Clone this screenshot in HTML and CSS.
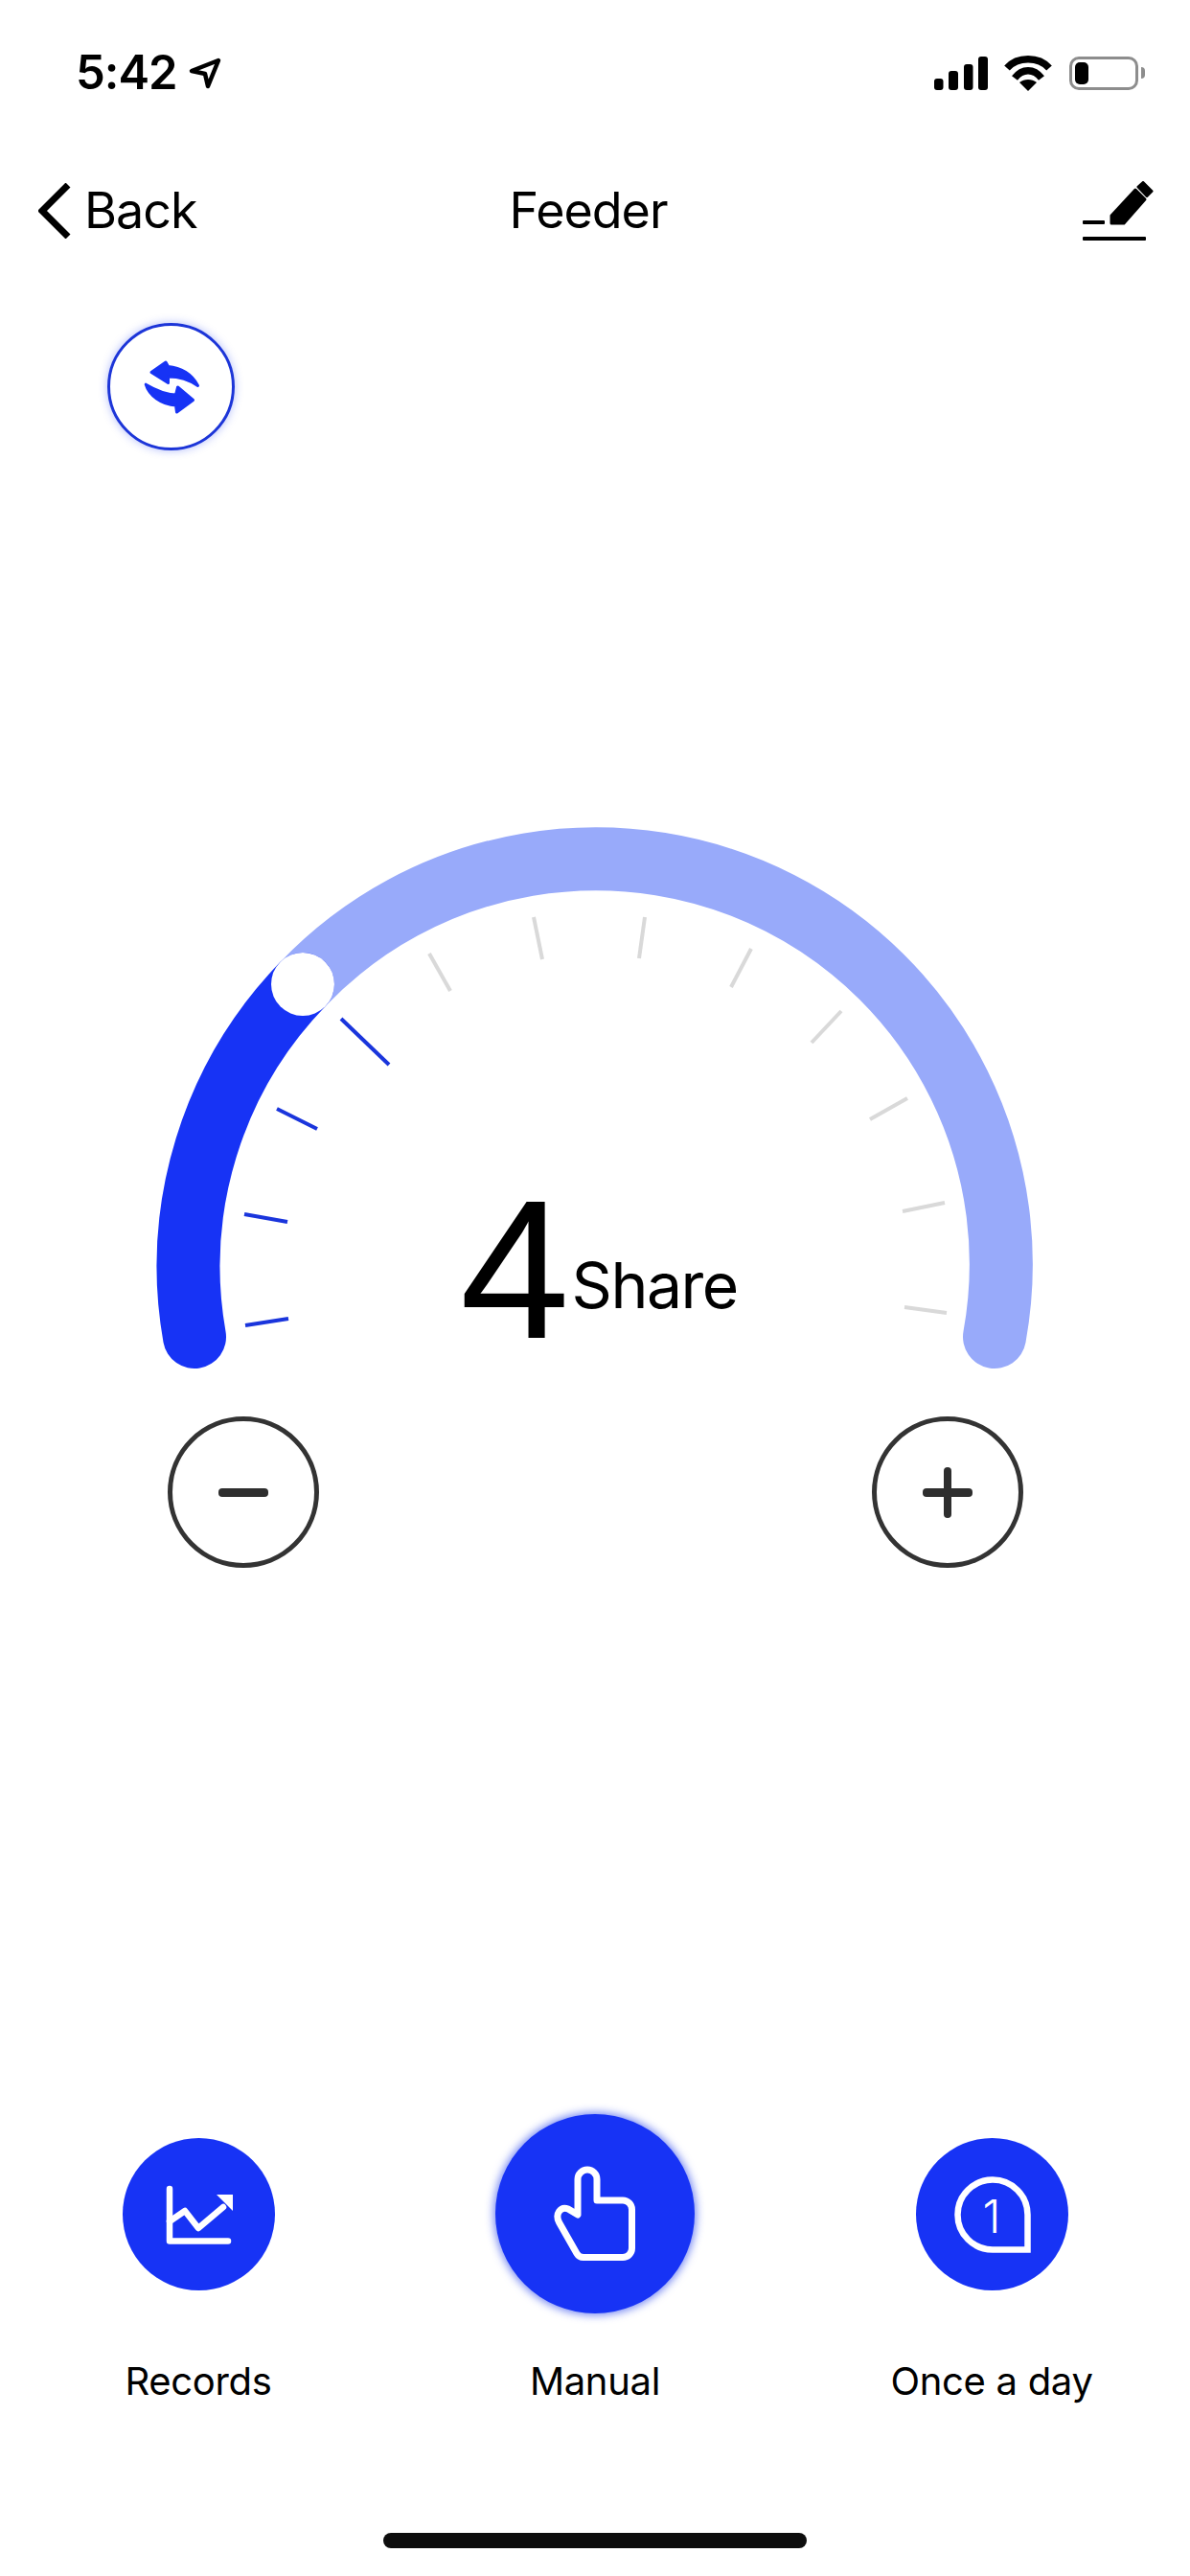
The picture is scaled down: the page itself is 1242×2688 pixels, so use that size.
FILE: index.html
```html
<!DOCTYPE html>
<html lang="en">

<head>
    <meta charset="UTF-8">
    <meta name="viewport" content="width=device-width, initial-scale=1.0">
    <title>Feeder</title>
    <link rel="stylesheet" href="styles.css">
</head>

<body>
    <!-- Status bar -->
    <div class="status">
        <div class="status-left">
            <span class="time">5:42</span>
            <svg class="loc" viewBox="0 0 34 33"><path d="M31 3 L3 14 L17 17 L20 30 Z" /></svg>
        </div>
        <div class="status-right">
            <svg class="signal" viewBox="0 0 56 35">
                <rect x="0" y="23" width="9.500" height="12" rx="3" />
                <rect x="15" y="15" width="10" height="20" rx="3" />
                <rect x="31" y="8" width="9.500" height="27" rx="3" />
                <rect x="46" y="0" width="10" height="35" rx="3" />
            </svg>
            <svg class="wifi" viewBox="0 0 50 37">
                <path class="wifi-arc" d="M3 13 C14 0.700 36 0.700 47 13" />
                <path class="wifi-arc" d="M11 23.500 C19 13 31 13 39 23.500" />
                <path class="wifi-dot" d="M25 37 L16 28 C21 24 29 24 34 28 Z" />
            </svg>
            <div class="battery"><div class="battery-fill"></div></div>
            <div class="battery-nub"></div>
        </div>
    </div>

    <!-- Barra de navegacion -->
    <div class="nav">
        <div class="back">
            <svg class="chevron" viewBox="0 0 34 58"><path d="M31 2 L4 29 L31 56" /></svg>
            <span>Back</span>
        </div>
        <div class="title">Feeder</div>
        <svg class="edit" viewBox="0 0 75 62">
            <rect x="0" y="41" width="23" height="4" rx="1" />
            <rect x="0" y="58" width="66" height="4" rx="1" />
            <path d="M30 36 L55 9 L65 19 L43 44 H30 Z" />
            <path d="M58 6 L63 1.500 L72 10.500 L67 15.500 Z" />
        </svg>
    </div>

    <div class="swap">
        <svg viewBox="-1.500 -1.500 80 70">
            <path d="M17.500 18 L32.500 7.500 L35 12 C48 13 60 20 66 32 C56 25 45 22.500 35 22.500 L35 29 Z" />
            <path d="M61 47 L45 33.500 L43 41.500 C34 41 24 38 11.700 30.700 C15 42 28 52 43 52.500 L44 59.500 Z" />
        </svg>
    </div>

    <!-- Dial -->
    <div class="gauge">
        <svg class="dial" viewBox="0 850 1242 600">
            <path class="arc-rest" d="M316 1027 A423 423 0 0 1 1038 1395" />
            <path class="arc-done" d="M203 1395 A423 423 0 0 1 316 1027" />
            <circle class="knob" cx="316" cy="1027" r="33" />
            <line class="tick on" x1="256" y1="1383" x2="301" y2="1376" />
            <line class="tick on" x1="255" y1="1267" x2="300" y2="1275" />
            <line class="tick on" x1="289" y1="1157" x2="331" y2="1178" />
            <line class="tick on" x1="356" y1="1063" x2="406" y2="1111" />
            <line class="tick" x1="448" y1="995" x2="470" y2="1034" />
            <line class="tick" x1="557" y1="957" x2="566" y2="1001" />
            <line class="tick" x1="673" y1="957" x2="667" y2="1000" />
            <line class="tick" x1="784" y1="990" x2="763" y2="1030" />
            <line class="tick" x1="878" y1="1055" x2="847" y2="1088" />
            <line class="tick" x1="947" y1="1146" x2="908" y2="1168" />
            <line class="tick" x1="986" y1="1255" x2="942" y2="1264" />
            <line class="tick" x1="988" y1="1370" x2="944" y2="1364" />
        </svg>
        <div class="value">
            <span class="value-num">4</span><span class="value-unit">Share</span>
        </div>
    </div>

    <div class="steppers">
        <div class="stepper"><div class="bar"></div></div>
        <div class="stepper"><div class="bar"></div><div class="bar bar-v"></div></div>
    </div>

    <!-- Modos -->
    <div class="tabs">
        <div class="tab">
            <div class="tab-icon">
                <div class="circle">
                    <svg viewBox="0 0 159 159">
                        <path class="line" d="M49 53 V107.500 H110" />
                        <path class="line" d="M49 87 L65 76 L79 94 L105 72" />
                        <path class="fill" d="M98 59 H115 V76 Z" />
                    </svg>
                </div>
            </div>
            <div class="tab-label">Records</div>
        </div>
        <div class="tab">
            <div class="tab-icon">
                <div class="circle circle-big">
                    <svg viewBox="-2 -2 208 208">
                        <path class="line" d="M84 103 V66 A10 10 0 0 1 104 66 V88 H131 A9.500 9.500 0 0 1 140.500 97.500 V138 A9.500 9.500 0 0 1 131 147.500 H90 A8 8 0 0 1 83 143.500 L64.500 111 C60 102 66 94 74 97 Z" />
                    </svg>
                </div>
            </div>
            <div class="tab-label">Manual</div>
        </div>
        <div class="tab">
            <div class="tab-icon">
                <div class="circle">
                    <svg viewBox="0 0 159 159">
                        <path class="line line-sharp" d="M80 43.500 A36.500 36.500 0 0 1 116.500 80 V116.500 H80 A36.500 36.500 0 0 1 80 43.500 Z" />
                        <text class="once-num" x="79" y="99" text-anchor="middle">1</text>
                    </svg>
                </div>
            </div>
            <div class="tab-label">Once a day</div>
        </div>
    </div>

    <div class="home"></div>
</body>

</html>
```

FILE: styles.css
```css
body {
    font-family: Inter, "Liberation Sans", sans-serif;
    margin: 0;
    padding: 0;
    background-color: #fff;
    color: #000;
    width: 1242px;
    height: 2688px;
    overflow: hidden;
}

svg {
    display: block;
}

/* status bar */
.status {
    display: flex;
    justify-content: space-between;
    align-items: center;
    height: 40px;
    padding: 56px 47px 0 79px;
}

.status-left {
    display: flex;
    align-items: center;
    gap: 12px;
}

.time {
    font-size: 49px;
    font-weight: 600;
    line-height: 40px;
    letter-spacing: -1px;
}

.loc {
    width: 34px;
    height: 33px;
}

.loc path {
    fill: none;
    stroke: #000;
    stroke-width: 4.500;
    stroke-linejoin: round;
}

.status-right {
    display: flex;
    align-items: center;
}

.signal {
    width: 56px;
    height: 35px;
    margin-right: 17px;
}

.wifi {
    width: 50px;
    height: 37px;
    margin-right: 18px;
}

.wifi-arc {
    fill: none;
    stroke: #000;
    stroke-width: 7.500;
}

.battery {
    box-sizing: border-box;
    width: 72px;
    height: 35px;
    padding: 3px;
    border: 3px solid #8d8d8d;
    border-radius: 10px;
}

.battery-fill {
    width: 14px;
    height: 23px;
    background-color: #000;
    border-radius: 5px;
}

.battery-nub {
    width: 4px;
    height: 12px;
    margin-left: 3px;
    background-color: #8d8d8d;
    border-radius: 0 6px 6px 0;
}

/* nav */
.nav {
    display: grid;
    grid-template-columns: 1fr auto 1fr;
    align-items: center;
    height: 60px;
    margin-top: 92px;
    padding: 0 37px 0 40px;
    font-size: 52px;
    letter-spacing: -1px;
}

.back {
    display: flex;
    align-items: center;
    gap: 14px;
}

.chevron {
    width: 34px;
    height: 58px;
}

.chevron path {
    fill: none;
    stroke: #000;
    stroke-width: 7;
}

.title {
    margin-right: 17px;
}

.edit {
    justify-self: end;
    width: 75px;
    height: 62px;
}

.edit path {
    stroke: #000;
    stroke-width: 3;
    stroke-linejoin: round;
}

/* swap */
.swap {
    display: flex;
    align-items: center;
    justify-content: center;
    box-sizing: border-box;
    width: 133px;
    height: 133px;
    margin: 89px 0 0 112px;
    border: 3px solid #1c35d8;
    border-radius: 50%;
    box-shadow: 0 0 10px rgba(30, 60, 240, 0.35);
}

.swap svg {
    width: 80px;
    height: 70px;
}

.swap path {
    fill: #1733f5;
    stroke: #1733f5;
    stroke-width: 3;
    stroke-linejoin: round;
}

/* gauge */
.gauge {
    position: relative;
    height: 600px;
    margin-top: 380px;
}

.dial {
    width: 1242px;
    height: 600px;
}

.arc-rest,
.arc-done {
    fill: none;
    stroke-width: 66;
    stroke-linecap: round;
}

.arc-rest {
    stroke: #98aafa;
}

.arc-done {
    stroke: #1733f5;
}

.knob {
    fill: #fff;
}

.tick {
    stroke: #d9d9d9;
    stroke-width: 4;
}

.tick.on {
    stroke: #1a35dc;
}

.value {
    position: absolute;
    left: 480px;
    top: 370px;
    white-space: nowrap;
}

.value-num {
    font-family: "Liberation Sans", sans-serif;
    font-size: 206px;
    line-height: 210px;
}

.value-unit {
    margin-left: 2px;
    font-size: 66px;
    letter-spacing: -1.500px;
    vertical-align: 31px;
}

/* plus / minus */
.steppers {
    display: flex;
    justify-content: space-between;
    margin-top: 28px;
    padding: 0 174px 0 175px;
}

.stepper {
    position: relative;
    display: flex;
    align-items: center;
    justify-content: center;
    box-sizing: border-box;
    width: 158px;
    height: 158px;
    border: 5px solid #333;
    border-radius: 50%;
}

.bar {
    width: 52px;
    height: 9px;
    background-color: #2e2e2e;
    border-radius: 4px;
}

.bar-v {
    position: absolute;
    width: 8px;
    height: 53px;
}

/* bottom tabs */
.tabs {
    display: grid;
    grid-template-columns: repeat(3, 1fr);
    margin-top: 569px;
}

.tab {
    display: flex;
    flex-direction: column;
    align-items: center;
}

.tab-icon {
    display: flex;
    align-items: center;
    justify-content: center;
    height: 210px;
}

.circle {
    width: 159px;
    height: 159px;
    background-color: #1733f5;
    border-radius: 50%;
}

.circle-big {
    width: 208px;
    height: 208px;
    box-shadow: 0 0 8px 2px rgba(30, 60, 235, 0.6);
}

.line {
    fill: none;
    stroke: #fff;
    stroke-width: 6.500;
    stroke-linecap: round;
    stroke-linejoin: round;
}

.circle-big .line {
    stroke-width: 7;
}

.line-sharp {
    stroke-linejoin: miter;
}

.fill {
    fill: #fff;
}

.once-num {
    fill: #fff;
    font-size: 48px;
    font-weight: 300;
}

.tab-label {
    margin-top: 47px;
    font-size: 40px;
    line-height: 46px;
    letter-spacing: -0.300px;
}

.home {
    width: 442px;
    height: 16px;
    margin: 135px auto 0;
    background-color: #0d0d0d;
    border-radius: 8px;
}
```
